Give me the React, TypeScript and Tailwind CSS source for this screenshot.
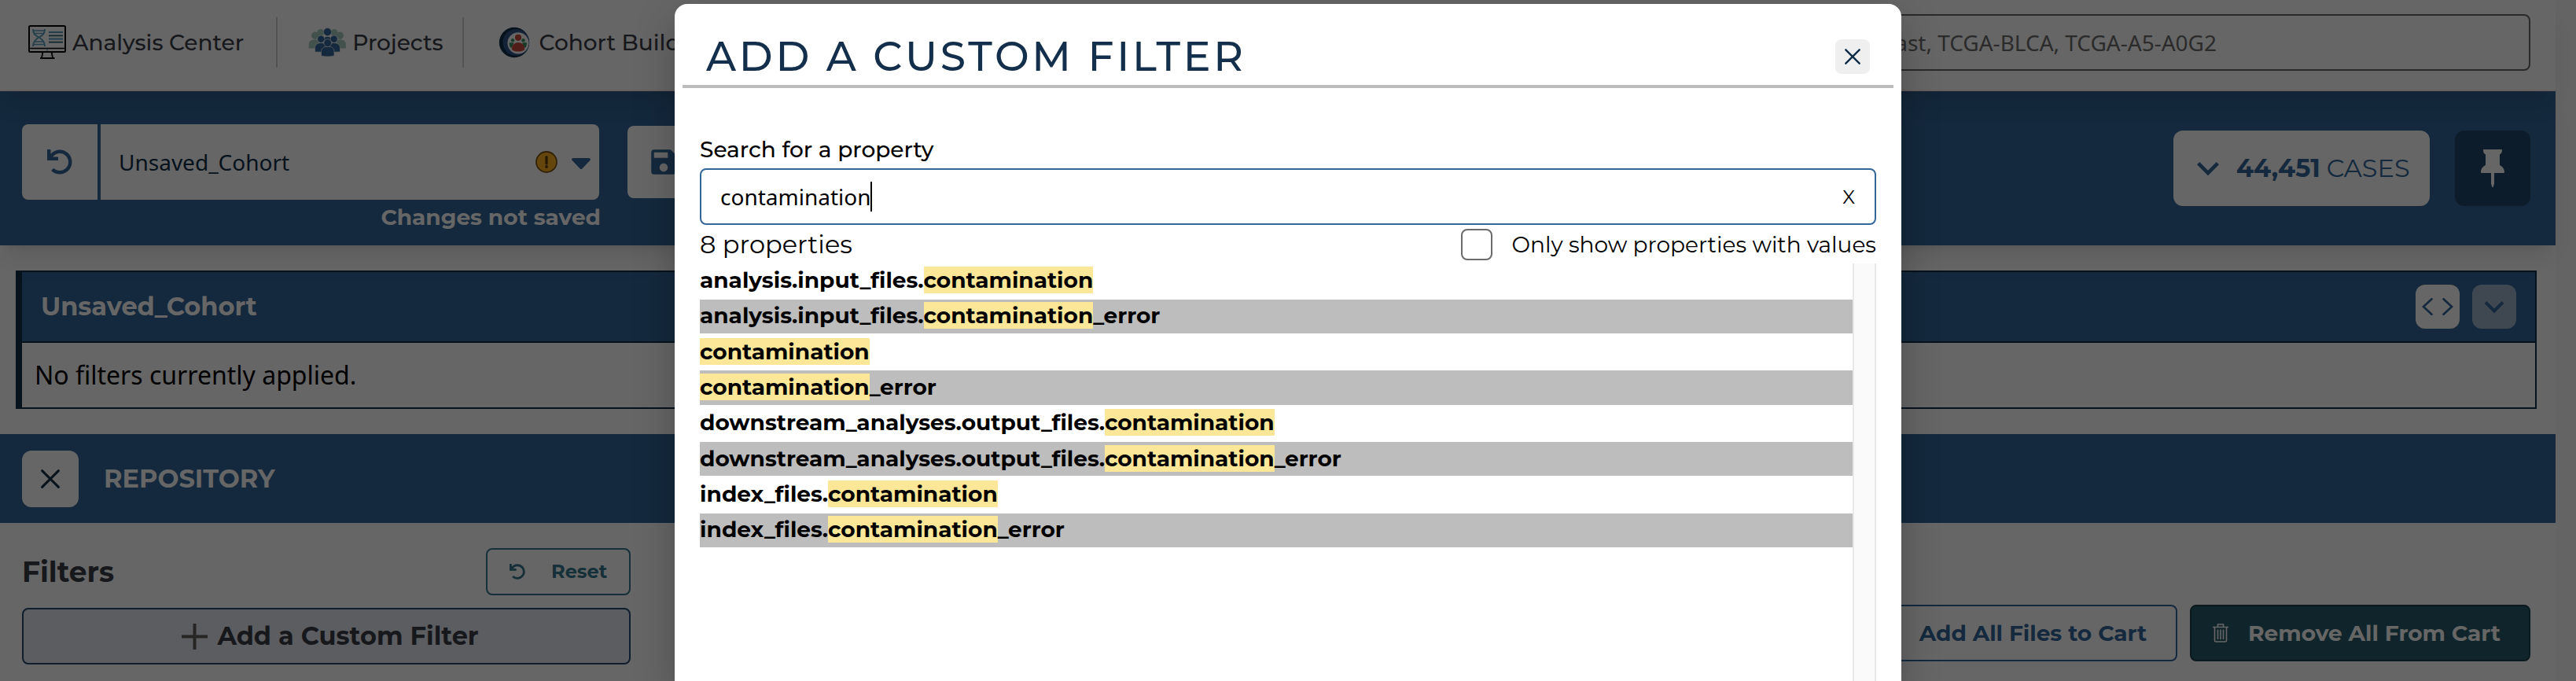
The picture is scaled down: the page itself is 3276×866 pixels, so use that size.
import type { ReactNode } from "react";
import { FaUndo } from "react-icons/fa";
import { MdExpandMore, MdSave } from "react-icons/md";

const QUERY = "contamination";

const PROPERTIES = [
  "analysis.input_files.contamination",
  "analysis.input_files.contamination_error",
  "contamination",
  "contamination_error",
  "downstream_analyses.output_files.contamination",
  "downstream_analyses.output_files.contamination_error",
  "index_files.contamination",
  "index_files.contamination_error",
];

function AnalysisIcon() {
  return (
    <svg className="h-[44px] w-[48px]" viewBox="0 0 48 44" fill="none">
      <rect x="1" y="1" width="46" height="33" rx="1.5" stroke="#000" strokeWidth="2" />
      <path d="M1 29.500h46" stroke="#000" strokeWidth="1.600" />
      <path d="M18.500 34l-1.500 7.500M29.500 34l1.500 7.500" stroke="#000" strokeWidth="1.800" />
      <path d="M15 42h18.500" stroke="#000" strokeWidth="2" />
      <circle cx="24" cy="31.700" r="0.900" fill="#4aa3c0" />
      <path d="M6 5c0 6 3 8 7.500 10.500S21 21 21 27M21 5c0 6-3 8-7.500 10.500S6 21 6 27" stroke="#5a9dbd" strokeWidth="2" />
      <path d="M6.500 7h14M8 10.500h11M8 21h11M6.500 24.500h14" stroke="#5a9dbd" strokeWidth="1.500" />
      <path d="M26 9h18M26 17.500h18" stroke="#5a9dbd" strokeWidth="1.800" />
      <path d="M26 13.300h18M26 21.600h18" stroke="#2a6274" strokeWidth="1.800" />
    </svg>
  );
}

function ProjectsIcon() {
  return (
    <svg className="h-[38px] w-[48px]" viewBox="0 0 48 38">
      <g fill="#a5cbbd">
        <circle cx="15.700" cy="6.500" r="4.500" />
        <circle cx="33" cy="6.500" r="4.500" />
        <circle cx="8.700" cy="10.200" r="4.700" />
        <circle cx="40.300" cy="10.200" r="4.700" />
        <path d="M0.700 26.500V21c0-3.500 2.500-5.500 8-5.500 3 0 4.300.6 5.300 2l-5 9z" />
        <path d="M47.800 26.500V21c0-3.500-2.500-5.500-7.500-5.500-3 0-4.300.6-5.300 2l5 9z" />
      </g>
      <g fill="#336699" stroke="#fff" strokeWidth="0.700">
        <path d="M19 17c0-4 2-5.500 5.500-5.500S30 13 30 17z" />
        <circle cx="24.500" cy="5.600" r="5.100" />
        <circle cx="16.300" cy="14.700" r="4.600" />
        <circle cx="32.700" cy="14.700" r="4.600" />
        <path d="M8.500 31v-5c0-4 3-6.500 7.800-6.500 4 0 6.200 2 6.200 5.500v6.500z" />
        <path d="M40.500 31v-5c0-4-3-6.500-7.800-6.500-4 0-6.200 2-6.200 5.500v6.500z" />
        <path d="M16.500 36v-5c0-4.500 3-7 8.300-7s8.200 2.500 8.200 7v5c-5 1.300-11.500 1.300-16.500 0z" />
        <circle cx="24.700" cy="19.600" r="4.900" />
      </g>
    </svg>
  );
}

function CohortIcon() {
  return (
    <svg className="h-[40px] w-[40px]" viewBox="0 0 40 40">
      <circle cx="20" cy="20" r="19.200" fill="#0f2d46" />
      <circle cx="22.300" cy="20" r="16.800" fill="#34558b" />
      <circle cx="25" cy="20.800" r="13.600" fill="#fff" />
      <g fill="#3c9463">
        <circle cx="18" cy="17.200" r="2.200" />
        <circle cx="31.500" cy="17.200" r="2.200" />
        <path d="M13.500 20.300h6l-2.500 6.200h-2c-1-2-1.500-4-1.500-6.200z" />
        <path d="M36 20.300h-6l2.500 6.200h2c1-2 1.500-4 1.500-6.200z" />
      </g>
      <circle cx="25" cy="13.800" r="4.100" fill="#c9493c" />
      <path d="M16.800 29c0-5.500 3-9 8.200-9s8.200 3.500 8.200 9c-2 1.800-5 2.600-8.200 2.600s-6.200-.8-8.200-2.600z" fill="#c9493c" />
    </svg>
  );
}

function Cross({ className }: { className: string }) {
  return (
    <svg className={className} viewBox="0 0 24 24" fill="none" stroke="currentColor" strokeWidth="2.900" strokeLinecap="round">
      <path d="M1.600 1.600l20.800 20.800M22.400 1.600L1.600 22.400" />
    </svg>
  );
}

function PinIcon() {
  return (
    <svg className="h-[48px] w-[30px]" viewBox="0 0 30 48" fill="currentColor">
      <path d="M4 0h22a1 1 0 0 1 1 1c0 2.500-.8 4.200-3 5.500V20c3.500 1.800 6 4.800 6 9a1 1 0 0 1-1 1H1a1 1 0 0 1-1-1c0-4.200 2.500-7.200 6-9V6.500C3.800 5.200 3 3.500 3 1a1 1 0 0 1 1-1z" />
      <path d="M13 30h4v13.500L15.700 48h-1.400L13 43.500z" />
    </svg>
  );
}

function TrashIcon() {
  return (
    <svg className="h-[24px] w-[20px]" viewBox="0 0 20 24" fill="none" stroke="currentColor" strokeWidth="1.600">
      <path d="M0 4.500h20M6.500 4.500V1h7v3.500M2.500 4.500v17q0 1.500 1.500 1.500h12q1.500 0 1.500-1.500v-17" />
      <path d="M6.500 7.500v12.500M10 7.500v12.500M13.500 7.500v12.500" />
    </svg>
  );
}

function NavItem({ icon, children }: { icon: ReactNode; children: ReactNode }) {
  return (
    <div className="flex items-center gap-2 text-[28px] font-medium whitespace-nowrap text-[#3b3d47]">
      <span className="flex w-[48px] justify-center">{icon}</span>
      <span>{children}</span>
    </div>
  );
}

function TopBar() {
  return (
    <header className="relative z-20 flex h-[116px] items-center border-b-2 border-[#fdeee8] bg-white pb-[6px] pl-[36px] shadow-[0_20px_30px_-6px_rgba(0,0,0,0.1),0_8px_12px_-8px_rgba(0,0,0,0.1)]">
      <NavItem icon={<AnalysisIcon />}>Analysis Center</NavItem>
      <div className="mr-[39px] ml-[41px] h-16 w-[2px] bg-[#d2d2d2]" />
      <NavItem icon={<ProjectsIcon />}>Projects</NavItem>
      <div className="mr-[40px] ml-[24px] h-16 w-[2px] bg-[#d2d2d2]" />
      <NavItem icon={<CohortIcon />}>Cohort Builder</NavItem>
      <div className="mr-8 ml-auto flex h-[72px] w-[1040px] items-center justify-end rounded-lg border-2 border-[#6a6a6a] pr-[397px] font-['Noto_Sans'] text-[28px] text-[#6c6c6c]">
        e.g. BRAF, Breast, TCGA-BLCA, TCGA-A5-A0G2
      </div>
    </header>
  );
}

function CohortBar() {
  return (
    <section className="relative z-10 flex h-[196px] items-start bg-[#336699] pr-8 pl-7 shadow-[0_20px_30px_-6px_rgba(0,0,0,0.1),0_8px_12px_-8px_rgba(0,0,0,0.1)]">
      <div className="mt-[42px] flex w-[734px] flex-col">
        <div className="flex h-24 gap-1">
          <div className="flex w-24 items-center justify-center rounded-l-lg bg-white text-[#336699]">
            <FaUndo className="size-8" />
          </div>
          <div className="flex flex-1 items-center rounded-r-lg bg-white pr-[11px] pl-[23px]">
            <span className="font-['Noto_Sans'] text-[28px] text-[#0f2d46]">Unsaved_Cohort</span>
            <svg className="ml-auto size-[28px]" viewBox="0 0 28 28">
              <circle cx="14" cy="14" r="13" fill="#fdb022" stroke="#7a5310" strokeWidth="1.800" />
              <path d="M14 7.500v8.500" stroke="#5f3d08" strokeWidth="3.200" strokeLinecap="round" />
              <circle cx="14" cy="20" r="1.900" fill="#5f3d08" />
            </svg>
            <svg className="mt-[3px] ml-[18px] h-[14px] w-[24px]" viewBox="0 0 24 14" fill="#336699">
              <path d="M2 0h20c1.700 0 2.500 1.800 1.300 3L13.400 13.400c-.8.8-2 .8-2.800 0L.7 3C-.5 1.800.3 0 2 0z" />
            </svg>
          </div>
        </div>
        <div className="-mr-[2px] flex h-[43px] items-center justify-end text-[28px] font-bold text-white">Changes not saved</div>
      </div>
      <div className="mt-[44px] ml-9 flex h-[92px] w-[92px] items-center justify-center rounded-lg bg-white text-[#336699]">
        <MdSave className="size-[42px]" />
      </div>
      <div className="mt-[50px] ml-auto flex h-24 w-[326px] items-center rounded-xl bg-white pl-4 text-[32px] text-[#336699]">
        <MdExpandMore className="size-14" />
        <span className="ml-2 font-bold">44,451</span>
        <span className="ml-2">CASES</span>
      </div>
      <div className="mt-[50px] ml-8 flex size-24 items-center justify-center rounded-xl bg-[#20476b] text-white">
        <PinIcon />
      </div>
    </section>
  );
}

function QueryPanel() {
  return (
    <section className="mt-8 ml-5 h-[176px] w-[3206px] border-2 border-l-8 border-[#0f2d46] bg-white">
      <div className="flex h-[90px] items-center border-b-2 border-[#0f2d46] bg-[#336699] pr-6 pl-6">
        <span className="text-[32px] font-bold text-white">Unsaved_Cohort</span>
        <div className="ml-auto flex gap-4 text-[#336699]">
          <div className="flex size-14 items-center justify-center rounded-xl bg-white">
            <svg className="h-[22px] w-[40px]" viewBox="0 0 40 22" fill="none" stroke="currentColor" strokeWidth="2.700" strokeLinecap="round">
              <path d="M12.500 1.300L2 11l10.500 9.700M27.500 1.300L38 11l-10.500 9.700" />
            </svg>
          </div>
          <div className="flex size-14 items-center justify-center rounded-xl bg-[#9db5cb]">
            <MdExpandMore className="size-[50px]" />
          </div>
        </div>
      </div>
      <div className="flex h-[82px] items-center pl-4 font-['Noto_Sans'] text-[32px] text-black">No filters currently applied.</div>
    </section>
  );
}

function RepositoryBar() {
  return (
    <section className="mt-8 flex h-[113px] items-center gap-8 bg-[#336699] pl-7">
      <div className="flex size-[72px] items-center justify-center rounded-xl bg-white text-[#0f2d46]">
        <Cross className="size-6" />
      </div>
      <span className="text-[32px] font-bold text-white">REPOSITORY</span>
    </section>
  );
}

function Workspace() {
  return (
    <section className="flex items-start pr-8 pl-7">
      <div className="mt-8 w-[774px]">
        <div className="flex h-[60px] items-center justify-between">
          <span className="text-[36px] font-bold text-[#3b3d47]">Filters</span>
          <div className="flex h-[60px] w-[184px] items-center gap-[33px] rounded-lg border-2 border-[#36788c] pl-7 text-[24px] font-bold text-[#36788c]">
            <FaUndo className="size-5" />
            Reset
          </div>
        </div>
        <div className="mt-4 flex h-[72px] items-center justify-center gap-3 rounded-lg border-2 border-[#264a72] bg-[#e6e8f2] pl-[10px] text-[32px] font-bold text-[#3b3d47]">
          <svg className="size-[33px] text-[#625f5a]" viewBox="0 0 33 33" stroke="currentColor" strokeWidth="4">
            <path d="M16.500 0v33M0 16.500h33" />
          </svg>
          Add a Custom Filter
        </div>
      </div>
      <div className="mt-[104px] ml-auto flex gap-4 text-[28px] font-bold">
        <div className="flex h-[72px] w-[367px] items-center justify-center rounded-lg border-2 border-[#336699] bg-white text-[#336699]">Add All Files to Cart</div>
        <div className="flex h-[72px] w-[433px] items-center rounded-lg border-2 border-[#1b3f4c] bg-[#2a5c6b] pl-[27px] text-white">
          <TrashIcon />
          <span className="ml-[25px]">Remove All From Cart</span>
        </div>
      </div>
    </section>
  );
}

function PropertyRow({ name, striped }: { name: string; striped: boolean }) {
  const [before, after] = name.split(QUERY);
  return (
    <div className={striped ? "flex h-[43.33px] items-center bg-[#bdbdbd] pb-[2px]" : "flex h-[43.33px] items-center pb-[2px]"}>
      <span className="text-[28px] leading-[34px] font-bold whitespace-nowrap">
        {before}
        <mark className="bg-[#fbe797] text-black">{QUERY}</mark>
        {after}
      </span>
    </div>
  );
}

function CustomFilterModal() {
  return (
    <div className="absolute inset-0 z-50 flex justify-center bg-black/60">
      <div className="mt-[5px] flex w-[1560px] flex-col rounded-t-2xl bg-white text-black shadow-[0_20px_50px_rgba(0,0,0,0.25)]">
        <div className="mx-[10px] flex h-[107px] items-center justify-between border-b-4 border-[#bdbdbd] px-[30px] pt-[31px]">
          <h1 className="text-[52px] font-medium tracking-[3.7px] whitespace-nowrap text-[#132f4b]">ADD A CUSTOM FILTER</h1>
          <div className="flex size-11 items-center justify-center rounded-lg bg-[#efefef] text-[#0f2d46]">
            <Cross className="size-[20px]" />
          </div>
        </div>
        <div className="flex flex-1 flex-col px-8 pt-[54px]">
          <div className="flex h-12 items-center text-[28px] font-medium">Search for a property</div>
          <div className="flex h-[72px] items-center rounded-lg border-2 border-[#336699] pr-[25px] pl-6 font-['Noto_Sans'] text-[28px]">
            <span>{QUERY}</span>
            <span className="-ml-[1px] h-[38px] w-[2px] bg-black" />
            <span className="mt-[2px] ml-auto font-['Montserrat'] text-[24px]">X</span>
          </div>
          <div className="flex h-[49px] items-center">
            <span className="text-[32px]">8 properties</span>
            <span className="ml-auto size-10 rounded-lg border-2 border-[#6b6b6b]" />
            <span className="ml-[25px] text-[28px]">Only show properties with values</span>
          </div>
          <div className="flex flex-1">
            <div className="flex flex-1 flex-col gap-[2px] pt-[0.3px]">
              {PROPERTIES.map((name, i) => (
                <PropertyRow key={name} name={name} striped={i % 2 === 1} />
              ))}
            </div>
            <div className="w-[30px] border-x-2 border-[#e8e8e8] bg-[#fafafa]" />
          </div>
        </div>
      </div>
    </div>
  );
}

export default function App() {
  return (
    <div className="relative flex h-[866px] w-[3276px] overflow-hidden bg-white font-['Montserrat','Noto_Sans',sans-serif]">
      <div className="flex w-[3250px] shrink-0 flex-col">
        <TopBar />
        <CohortBar />
        <QueryPanel />
        <RepositoryBar />
        <Workspace />
      </div>
      <div className="flex-1 bg-[#fafafa]" />
      <CustomFilterModal />
    </div>
  );
}
